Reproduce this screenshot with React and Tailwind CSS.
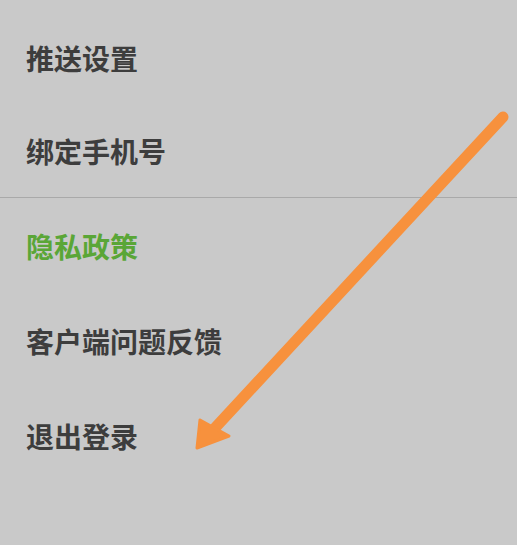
const items = [
  { label: '推送设置' },
  { label: '绑定手机号', divider: true },
  { label: '隐私政策', green: true },
  { label: '客户端问题反馈' },
  { label: '退出登录' },
];

const App = () => {
  return (
    <div
      className="relative w-[517px] h-[545px] overflow-hidden bg-[#c9c9c9]"
      style={{ fontFamily: '"Noto Sans CJK SC", "Noto Sans", sans-serif' }}
    >
      <div className="flex flex-col pt-[10px]">
        {items.map((item) => (
          <div
            key={item.label}
            className={
              item.divider
                ? 'h-[93px] flex items-center pl-[26px] border-b border-[#a9a9a9]'
                : 'h-[95px] flex items-center pl-[26px]'
            }
          >
            <span
              className={
                item.green
                  ? 'text-[28px] font-bold leading-none text-[#5aa637]'
                  : 'text-[28px] font-bold leading-none text-[#3d3d3d]'
              }
            >
              {item.label}
            </span>
          </div>
        ))}
      </div>

      {/* orange annotation arrow */}
      <svg className="absolute inset-0 pointer-events-none" width="517" height="545" viewBox="0 0 517 545">
        <line x1="503" y1="117" x2="214" y2="429" stroke="#f7913d" strokeWidth="11" strokeLinecap="round" />
        <polygon points="197,448 200,420 229,436" fill="#f7913d" stroke="#f7913d" strokeWidth="3" strokeLinejoin="round" />
      </svg>
    </div>
  );
};

export default App;
